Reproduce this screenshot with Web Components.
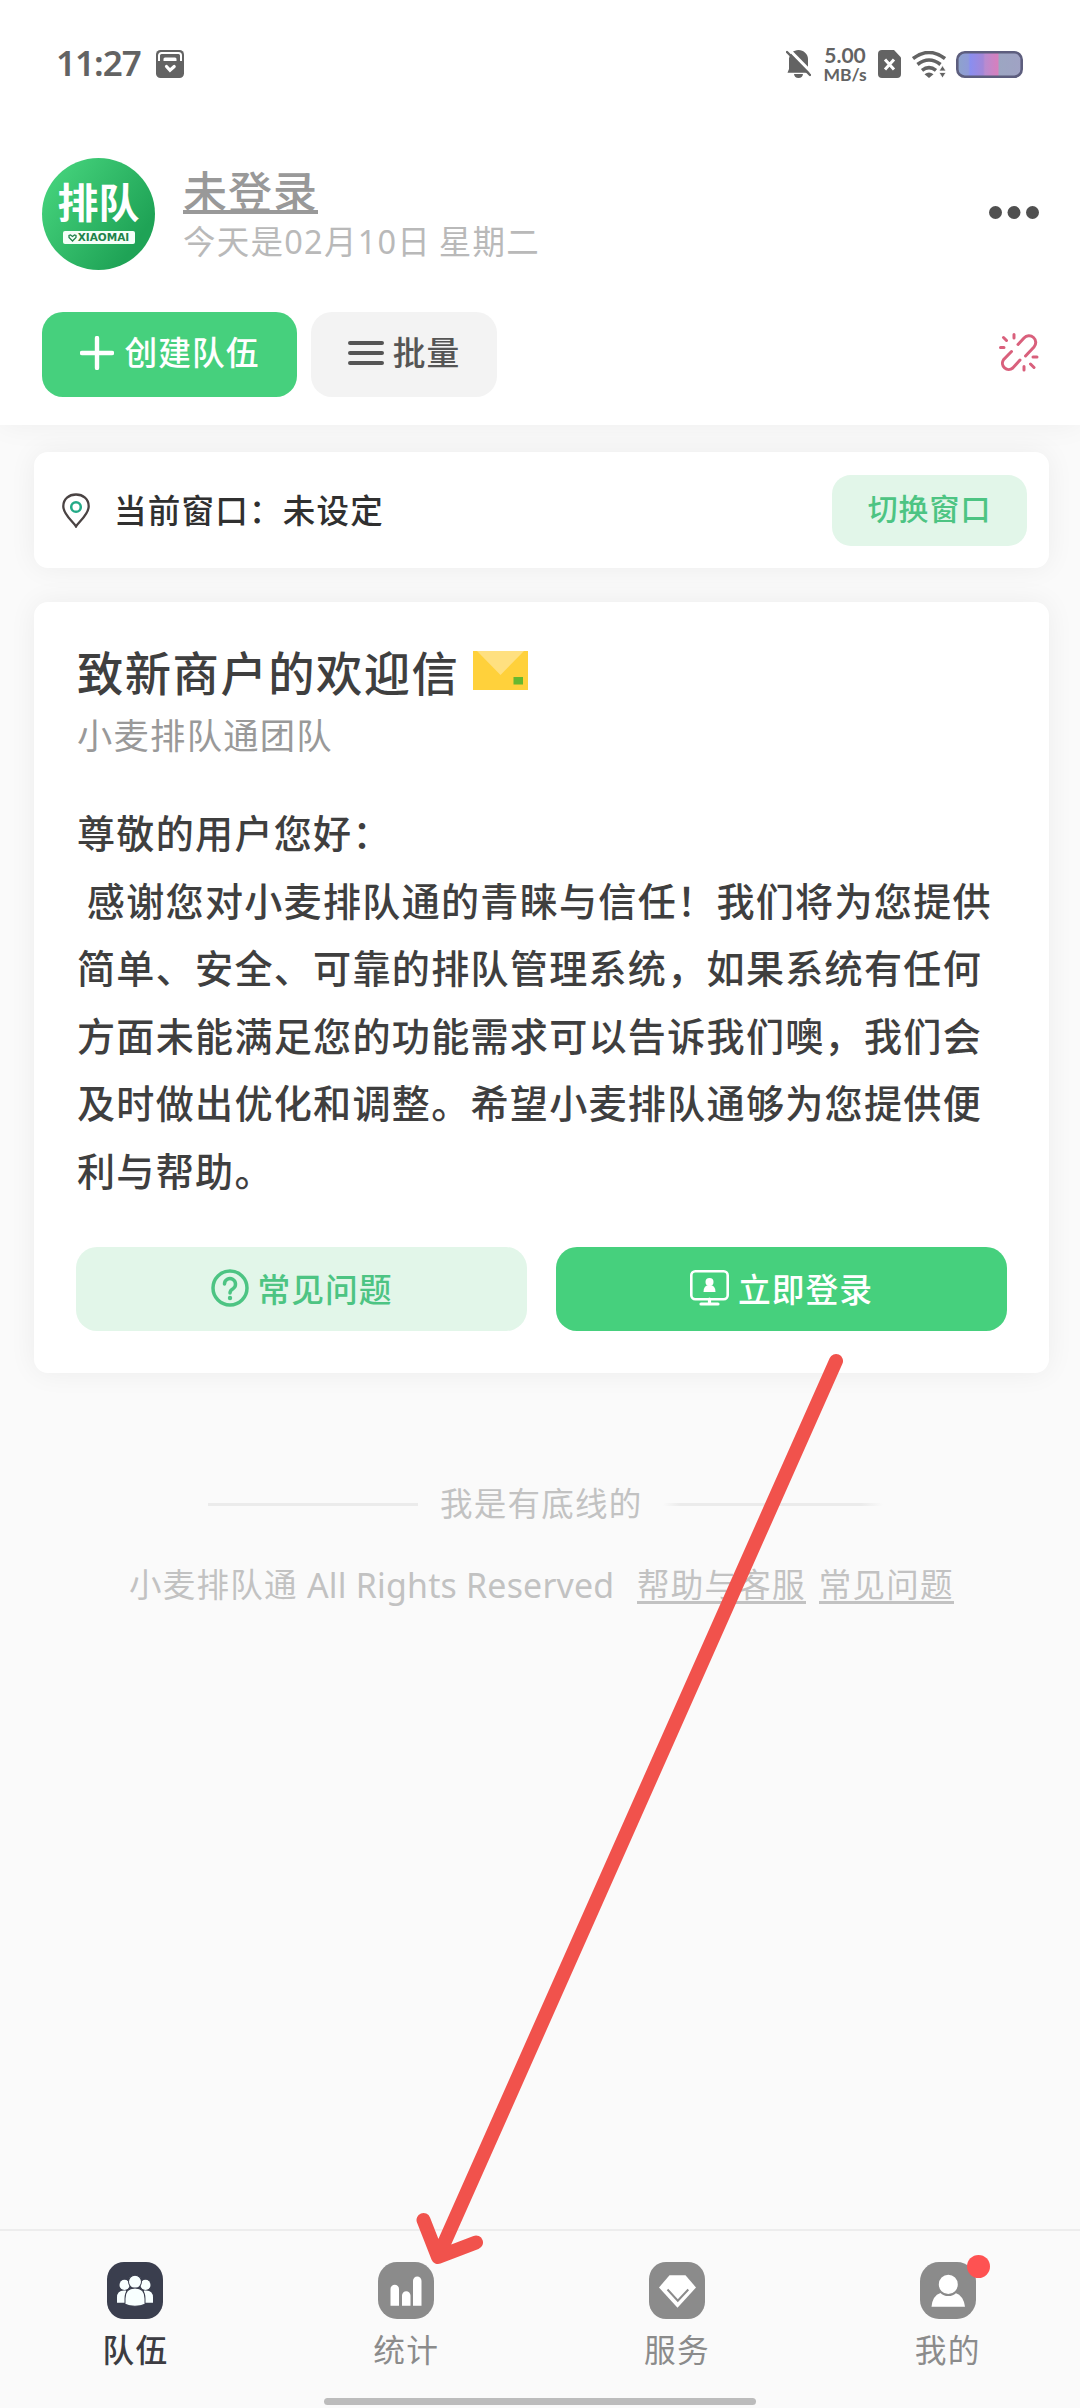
<!DOCTYPE html>
<html lang="zh-CN">
<head>
<meta charset="utf-8">
<title>小麦排队通</title>
<style>
html,body{margin:0;padding:0}
body{width:1080px;height:2408px;overflow:hidden;background:#fafafa;color:#3f3f3f;font-family:"Noto Sans","Noto Sans CJK SC",sans-serif;text-spacing-trim:space-all}
</style>
</head>
<body>
<queue-app></queue-app>
<script>
const define=(name,css,html)=>customElements.define(name,class extends HTMLElement{
  constructor(){super();this.attachShadow({mode:'open'}).innerHTML='<style>*{box-sizing:border-box}svg{display:block;flex:none}'+css+'</style>'+html;}
});

define('status-bar',`
:host{display:flex;height:158px;padding:45px 57px 0 56px;color:#636363;align-items:flex-start}
.time{font:600 35px/36px "Noto Sans",sans-serif;letter-spacing:-1px;width:100px;white-space:nowrap}
.lock{margin-top:5px}
.right{margin-left:auto;display:flex;align-items:flex-start}
.speed{width:46px;margin:0 10px 0 11px;text-align:center;font-family:Lato,sans-serif;font-weight:700;white-space:nowrap}
.speed div:first-child{font-size:21px;line-height:20px}
.speed div:last-child{font-size:17.500px;line-height:20px}
`,`<div class="time">11:27</div>
<svg class="lock" width="28" height="28" viewBox="0 0 28 28"><rect width="28" height="28" rx="4.500" fill="#636363"/><path d="M3 11V5.500a2.500 2.500 0 0 1 2.500-2.500H22.500A2.500 2.500 0 0 1 25 5.500V11" fill="none" stroke="#fff" stroke-width="2"/><path d="M7.500 11V9a1.500 1.500 0 0 1 1.500-1.500H19a1.500 1.500 0 0 1 1.500 1.500V11z" fill="#fff"/><path d="M10.500 16.500l3.500 3.800 4.200-3.800" fill="none" stroke="#fff" stroke-width="3.200" stroke-linecap="round"/></svg>
<div class="right">
<svg width="25" height="28" viewBox="0 0 25 28" style="margin-top:5px"><path d="M3 8.500C4 3.500 7.500 0 12.500 0S22 4 22 9v10l2 3.800H1.500L3 19z M8 24h9q-.5 4-4.500 4T8 24z" fill="#636363"/><path d="M3.500 0L25 22" stroke="#fff" stroke-width="3"/><path d="M1 2l23 23" stroke="#636363" stroke-width="2.400" stroke-linecap="round"/></svg>
<div class="speed"><div>5.00</div><div>MB/s</div></div>
<svg width="23" height="28" viewBox="0 0 23 28" style="margin:5px 11px 0 0"><path d="M4 0h12l7 7.500V24a4 4 0 0 1-4 4H4a4 4 0 0 1-4-4V4a4 4 0 0 1 4-4z" fill="#636363"/><path d="M7 9.500l9 10m0-10l-9 10" stroke="#fff" stroke-width="3"/></svg>
<svg width="34" height="28" viewBox="0 0 34 28" style="margin:6px 10px 0 0" fill="none" stroke="#636363" stroke-width="3.600"><path d="M1 7.500q16-12 32 0M5.500 13.500q11.500-9 23 0"/><path d="M10 19.300q7-5.500 14 0"/><path d="M12.500 23.300q4.500-3.500 9 0L17 27z" fill="#636363" stroke="none"/><path d="M27 20l3.500-5.500 3.500 5.500zM27 21.500l3.500 5.500 3.500-5.500z" fill="#636363" stroke="#fff" stroke-width=".8"/></svg>
<svg width="67" height="27" viewBox="0 0 67 27" style="margin-top:6px"><defs><linearGradient id="b"><stop offset="0" stop-color="#8ea3cb"/><stop offset=".17" stop-color="#8f9bd8"/><stop offset=".2" stop-color="#8a8ef0"/><stop offset=".4" stop-color="#a287d8"/><stop offset=".43" stop-color="#b88bd0"/><stop offset=".63" stop-color="#d77fbd"/><stop offset=".65" stop-color="#9ca6c2"/><stop offset="1" stop-color="#a0a2c4"/></linearGradient></defs><rect x="1.300" y="1.300" width="64.400" height="24.400" rx="7.500" fill="url(#b)" stroke="#5d5e7e" stroke-width="2.600"/></svg>
</div>`);

define('brand-avatar',`
:host{display:flex;flex-direction:column;align-items:center;width:113px;height:112px;border-radius:50%;background:linear-gradient(125deg,#42cf79 15%,#1fa356 80%);color:#fff;padding-top:22px;flex:none}
.name{font:700 41px/40px "Noto Sans CJK SC",sans-serif}
.tag{display:flex;align-items:center;justify-content:center;gap:1px;width:72px;height:13px;margin-top:11px;border-radius:2px;background:#f4fff8;color:#21824a;font:700 10.500px/13px "DejaVu Sans",sans-serif}
.tag span{white-space:nowrap}
`,`<div class="name">排队</div><div class="tag"><svg width="9" height="8" viewBox="0 0 9 8"><path d="M4.500 7L1 3.500V1.500L2.500 1l2 1.500L6.500 1 8 1.500v2z" fill="none" stroke="#21824a" stroke-width="1.300"/></svg><span>XIAOMAI</span></div>`);

define('app-button',`
:host{display:flex;align-items:center;justify-content:center;border-radius:21px;height:85px;padding-bottom:3px;font-size:32.750px;line-height:40px;letter-spacing:1px;font-weight:500;white-space:nowrap;flex:none;box-sizing:border-box}
:host([kind=solid]){background:#46d07d;color:#fff}
:host([kind=soft]){background:#e2f6e9;color:#4dc483}
:host([kind=plain]){background:#f3f3f3;color:#555}
`,`<slot name="icon"></slot><slot></slot>`);

define('app-header',`
:host{display:block;height:267px;padding:0 41px 0 42px}
.user{display:flex;height:154px;align-items:flex-start}
.who{display:flex;flex-direction:column;align-items:flex-start;margin-left:28px;padding-top:10px;flex:1;min-width:0}
.login{font:500 44px/44px "Noto Sans CJK SC",sans-serif;letter-spacing:1px;color:#999;height:46px;border-bottom:4px solid #999;white-space:nowrap}
.date{font-size:32.500px;line-height:40px;letter-spacing:1.250px;word-spacing:-2px;color:#b9b9b9;margin-top:8px;white-space:nowrap}
.dots{margin-top:48px}
.actions{display:flex;gap:14px;align-items:center}
.link{margin:-5px 0 0 auto}
`,`<div class="user"><brand-avatar></brand-avatar><div class="who"><div class="login">未登录</div><div class="date">今天是02月10日 星期二</div></div>
<svg class="dots" width="50" height="13" viewBox="0 0 50 13" fill="#505050"><circle cx="6.500" cy="6.500" r="6.500"/><circle cx="25" cy="6.500" r="6.500"/><circle cx="43.500" cy="6.500" r="6.500"/></svg></div>
<div class="actions"><app-button kind="solid" style="width:255px"><svg slot="icon" width="34" height="34" viewBox="0 0 34 34" style="margin-right:11px"><path d="M17 2v30M2 17h30" stroke="#fff" stroke-width="4.400" stroke-linecap="round"/></svg>创建队伍</app-button>
<app-button kind="plain" style="width:186px"><svg slot="icon" width="36" height="26" viewBox="0 0 36 26" style="margin-right:9px"><path d="M2 3h32M2 13h32M2 23h32" stroke="#555" stroke-width="4" stroke-linecap="round"/></svg>批量</app-button>
<svg class="link" width="40" height="40" viewBox="0 0 40 40" fill="none" stroke="#d9607c" stroke-width="3" stroke-linecap="round"><path d="M19 12.500l6-6.500a6.300 6.300 0 0 1 10 9l-8.500 9M12.500 19.500l-8 8.200a6.300 6.300 0 0 0 9.300 8.300L21 28M15 2.500V6M4.500 5.500l3 3M1.500 15.500H5M25 34.500V38M31.500 32l3.500 3.500M34 25h4"/></svg></div>`);

define('window-card',`
:host{display:flex;align-items:center;height:116px;margin:0 31px 0 34px;padding:0 22px 0 28px;border-radius:14px;background:#fff;box-shadow:0 0 28px rgba(0,0,0,.06);color:#303030;box-sizing:border-box}
.t{margin:-3px 0 0 24px;font-size:32.500px;line-height:40px;letter-spacing:1.250px;font-weight:500;flex:1;white-space:nowrap;font-family:"Noto Sans CJK SC",sans-serif}
`,`<svg width="28" height="35" viewBox="0 0 28 35" fill="none"><path d="M14 33.500C11 28 1.300 22 1.300 13.200 1.300 6 7 1.500 14 1.500S26.700 6 26.700 13.200C26.700 22 17 28 14 33.500z" stroke="#4a4343" stroke-width="2.300"/><circle cx="14" cy="14" r="4.800" stroke="#23aa87" stroke-width="2.500"/></svg><div class="t">当前窗口：未设定</div>
<app-button kind="soft" style="width:195px;height:71px;font-size:29.900px;border-radius:19px">切换窗口</app-button>`);

define('welcome-card',`
:host{display:flex;flex-direction:column;height:771px;margin:34px 31px 0 34px;padding:40px 42px 0 42px;border-radius:14px;background:#fff;box-shadow:0 0 28px rgba(0,0,0,.06);font-family:"Noto Sans CJK SC",sans-serif;color:#3f3f3f;box-sizing:border-box}
.title{display:flex;align-items:center;height:56px;font-size:46.300px;letter-spacing:1.500px;font-weight:500;padding-left:1px}
.title svg{margin:1px 0 0 14px}
.sub{font-size:35.300px;line-height:44px;letter-spacing:1.260px;color:#999;margin-top:14px;padding-left:1px}
.body{margin:42px 0 0 1px;width:932px;font-size:38.100px;letter-spacing:1.270px;font-weight:500;line-height:67.500px;white-space:pre-wrap;line-break:anywhere}
.row{display:flex;gap:29px;margin-top:44px}
`,`<div class="title">致新商户的欢迎信<svg width="55" height="39" viewBox="0 0 55 39"><path d="M0 0h55v39H0z" fill="#ffd13b"/><path d="M4 0h47L27.500 24z" fill="#ffe080"/><rect x="40.500" y="26" width="9.500" height="7.500" fill="#67b82f"/></svg></div>
<div class="sub">小麦排队通团队</div>
<div class="body">尊敬的用户您好：
 感谢您对小麦排队通的青睐与信任！我们将为您提供简单、安全、可靠的排队管理系统，如果系统有任何方面未能满足您的功能需求可以告诉我们噢，我们会及时做出优化和调整。希望小麦排队通够为您提供便利与帮助。</div>
<div class="row"><app-button kind="soft" style="width:451px;height:84px"><svg slot="icon" width="38" height="38" viewBox="0 0 38 38" fill="none" style="margin-right:9px"><circle cx="19" cy="19" r="17" stroke="#4dc483" stroke-width="3.500"/><path d="M13.500 15a5.500 5.500 0 1 1 8.500 4.700q-3 1.800-3 4.300" stroke="#4dc483" stroke-width="3.500" stroke-linecap="round"/><circle cx="19" cy="29" r="2.200" fill="#4dc483"/></svg>常见问题</app-button>
<app-button kind="solid" style="width:451px;height:84px"><svg slot="icon" width="39" height="36" viewBox="0 0 39 36" style="margin-right:9px" fill="none"><rect x="1.300" y="1.300" width="36.400" height="28" rx="4" stroke="#fff" stroke-width="2.600"/><path d="M19.500 29v5M11 34h17" stroke="#fff" stroke-width="3.200" stroke-linecap="round"/><circle cx="19.500" cy="12" r="4" fill="#fff"/><path d="M13.500 22q0-7 6-7t6 7z" fill="#fff"/></svg>立即登录</app-button></div>`);

define('page-footer',`
:host{display:flex;flex-direction:column;margin-top:109px;color:#c2c2c2;font-size:32.500px;line-height:44px;letter-spacing:1.250px}
.end{display:flex;align-items:center;padding-left:208px;white-space:nowrap}
.end i{width:210px;height:3px;background:#ebebeb}
.end i:last-child{width:220px;background:linear-gradient(90deg,#fafafa,#ebebeb 8%,#ebebeb 90%,#fafafa)}
.end span{margin:0 20px 0 22px}
.copy{display:flex;margin-top:37px;padding-left:129px;white-space:nowrap}
.copy .l{letter-spacing:.2px;margin-left:10px;width:330px;font-size:33.900px}
.copy u{text-decoration:none;height:41px;border-bottom:3px solid #c2c2c2;margin-right:13px;line-height:43px}
.copy .c{width:168px}
`,`<div class="end"><i></i><span>我是有底线的</span><i></i></div>
<div class="copy"><span class="c">小麦排队通</span><span class="l">All Rights Reserved</span><u>帮助与客服</u><u>常见问题</u></div>`);

define('tab-item',`
:host{display:flex;flex-direction:column;align-items:center;flex:1;color:#8b8b8b;padding-top:31px;position:relative;font-size:31.700px;line-height:40px;letter-spacing:1.250px;font-weight:400}
:host([active]){color:#3c3c42;font-weight:500}
.l{margin-top:11px}
.dot{display:none;position:absolute;left:155px;top:24px;width:23px;height:23px;border-radius:50%;background:#fe5252}
:host([badge]) .dot{display:block}
`,`<slot name="icon"></slot><div class="l"><slot></slot></div><div class="dot"></div>`);

define('tab-bar',`
:host{display:flex;flex-direction:column;margin-top:auto;height:179px;border-top:2px solid #ededed;box-sizing:border-box}
.tabs{display:flex;height:167px;margin-right:-3px}
.home{width:432px;height:7px;border-radius:4px;background:#bcbcbc;margin:0 auto}
`,`<div class="tabs">
<tab-item active><svg slot="icon" width="56" height="57" viewBox="0 0 56 56" preserveAspectRatio="none"><rect width="56" height="56" rx="17" fill="#3a3e4e"/><g fill="#f8ffff"><circle cx="17.500" cy="22.500" r="5"/><circle cx="38.500" cy="22.500" r="5"/><path d="M10 40V35q0-7 7-7h2v12zM46 40V35q0-7-7-7h-2v12z"/></g><g fill="#f8ffff" stroke="#3a3e4e" stroke-width="1"><circle cx="28" cy="19.500" r="6.500"/><path d="M18 41.500V36q0-10.500 10-10.500T38 36v5.500Q34 43.500 28 43.500t-10-2z"/></g></svg>队伍</tab-item>
<tab-item><svg slot="icon" width="56" height="57" viewBox="0 0 56 56" preserveAspectRatio="none"><rect width="56" height="56" rx="19" fill="#8b8b8b"/><path d="M12.500 43V26.500a4.200 4.200 0 0 1 8.500 0V43zM24 43V33a4.200 4.200 0 0 1 8.500 0V43zM35 43V18.500a4.200 4.200 0 0 1 8.500 0V43z" fill="#fff"/></svg>统计</tab-item>
<tab-item><svg slot="icon" width="56" height="57" viewBox="0 0 56 56" preserveAspectRatio="none"><rect width="56" height="56" rx="17" fill="#8b8b8b"/><path d="M20.500 13h16L47 25 28.500 45 10 25z" fill="#fff"/><path d="M18.500 27l10.300 11 10.500-11" fill="none" stroke="#8b8b8b" stroke-width="2"/></svg>服务</tab-item>
<tab-item badge><svg slot="icon" width="56" height="57" viewBox="0 0 56 56" preserveAspectRatio="none"><rect width="56" height="56" rx="19" fill="#8b8b8b"/><path d="M11.500 44q1-11 9-13.500h15q8 2.500 9.500 13.500z" fill="#fff"/><circle cx="28.300" cy="22" r="10.500" fill="#fff" stroke="#8b8b8b" stroke-width="2"/></svg>我的</tab-item>
</div><div class="home"></div>`);

define('pointer-arrow',`
:host{display:block;position:absolute;left:410px;top:1345px;width:440px;height:930px;pointer-events:none}
`,`<svg width="440" height="930" viewBox="410 1345 440 930" fill="none" stroke="#f1524c" stroke-width="14" stroke-linecap="round" stroke-linejoin="round"><path d="M836 1361L438 2257M423.500 2220L438 2257 476 2242.500"/></svg>`);

define('queue-app',`
:host{display:flex;flex-direction:column;position:relative;width:1080px;height:2408px;overflow:hidden}
.top{background:#fff;height:425px;box-shadow:0 0 28px rgba(0,0,0,.05);margin-bottom:27px;flex:none}
`,`<div class="top"><status-bar></status-bar><app-header></app-header></div>
<window-card></window-card><welcome-card></welcome-card><page-footer></page-footer><tab-bar></tab-bar><pointer-arrow></pointer-arrow>`);
</script>
</body>
</html>
